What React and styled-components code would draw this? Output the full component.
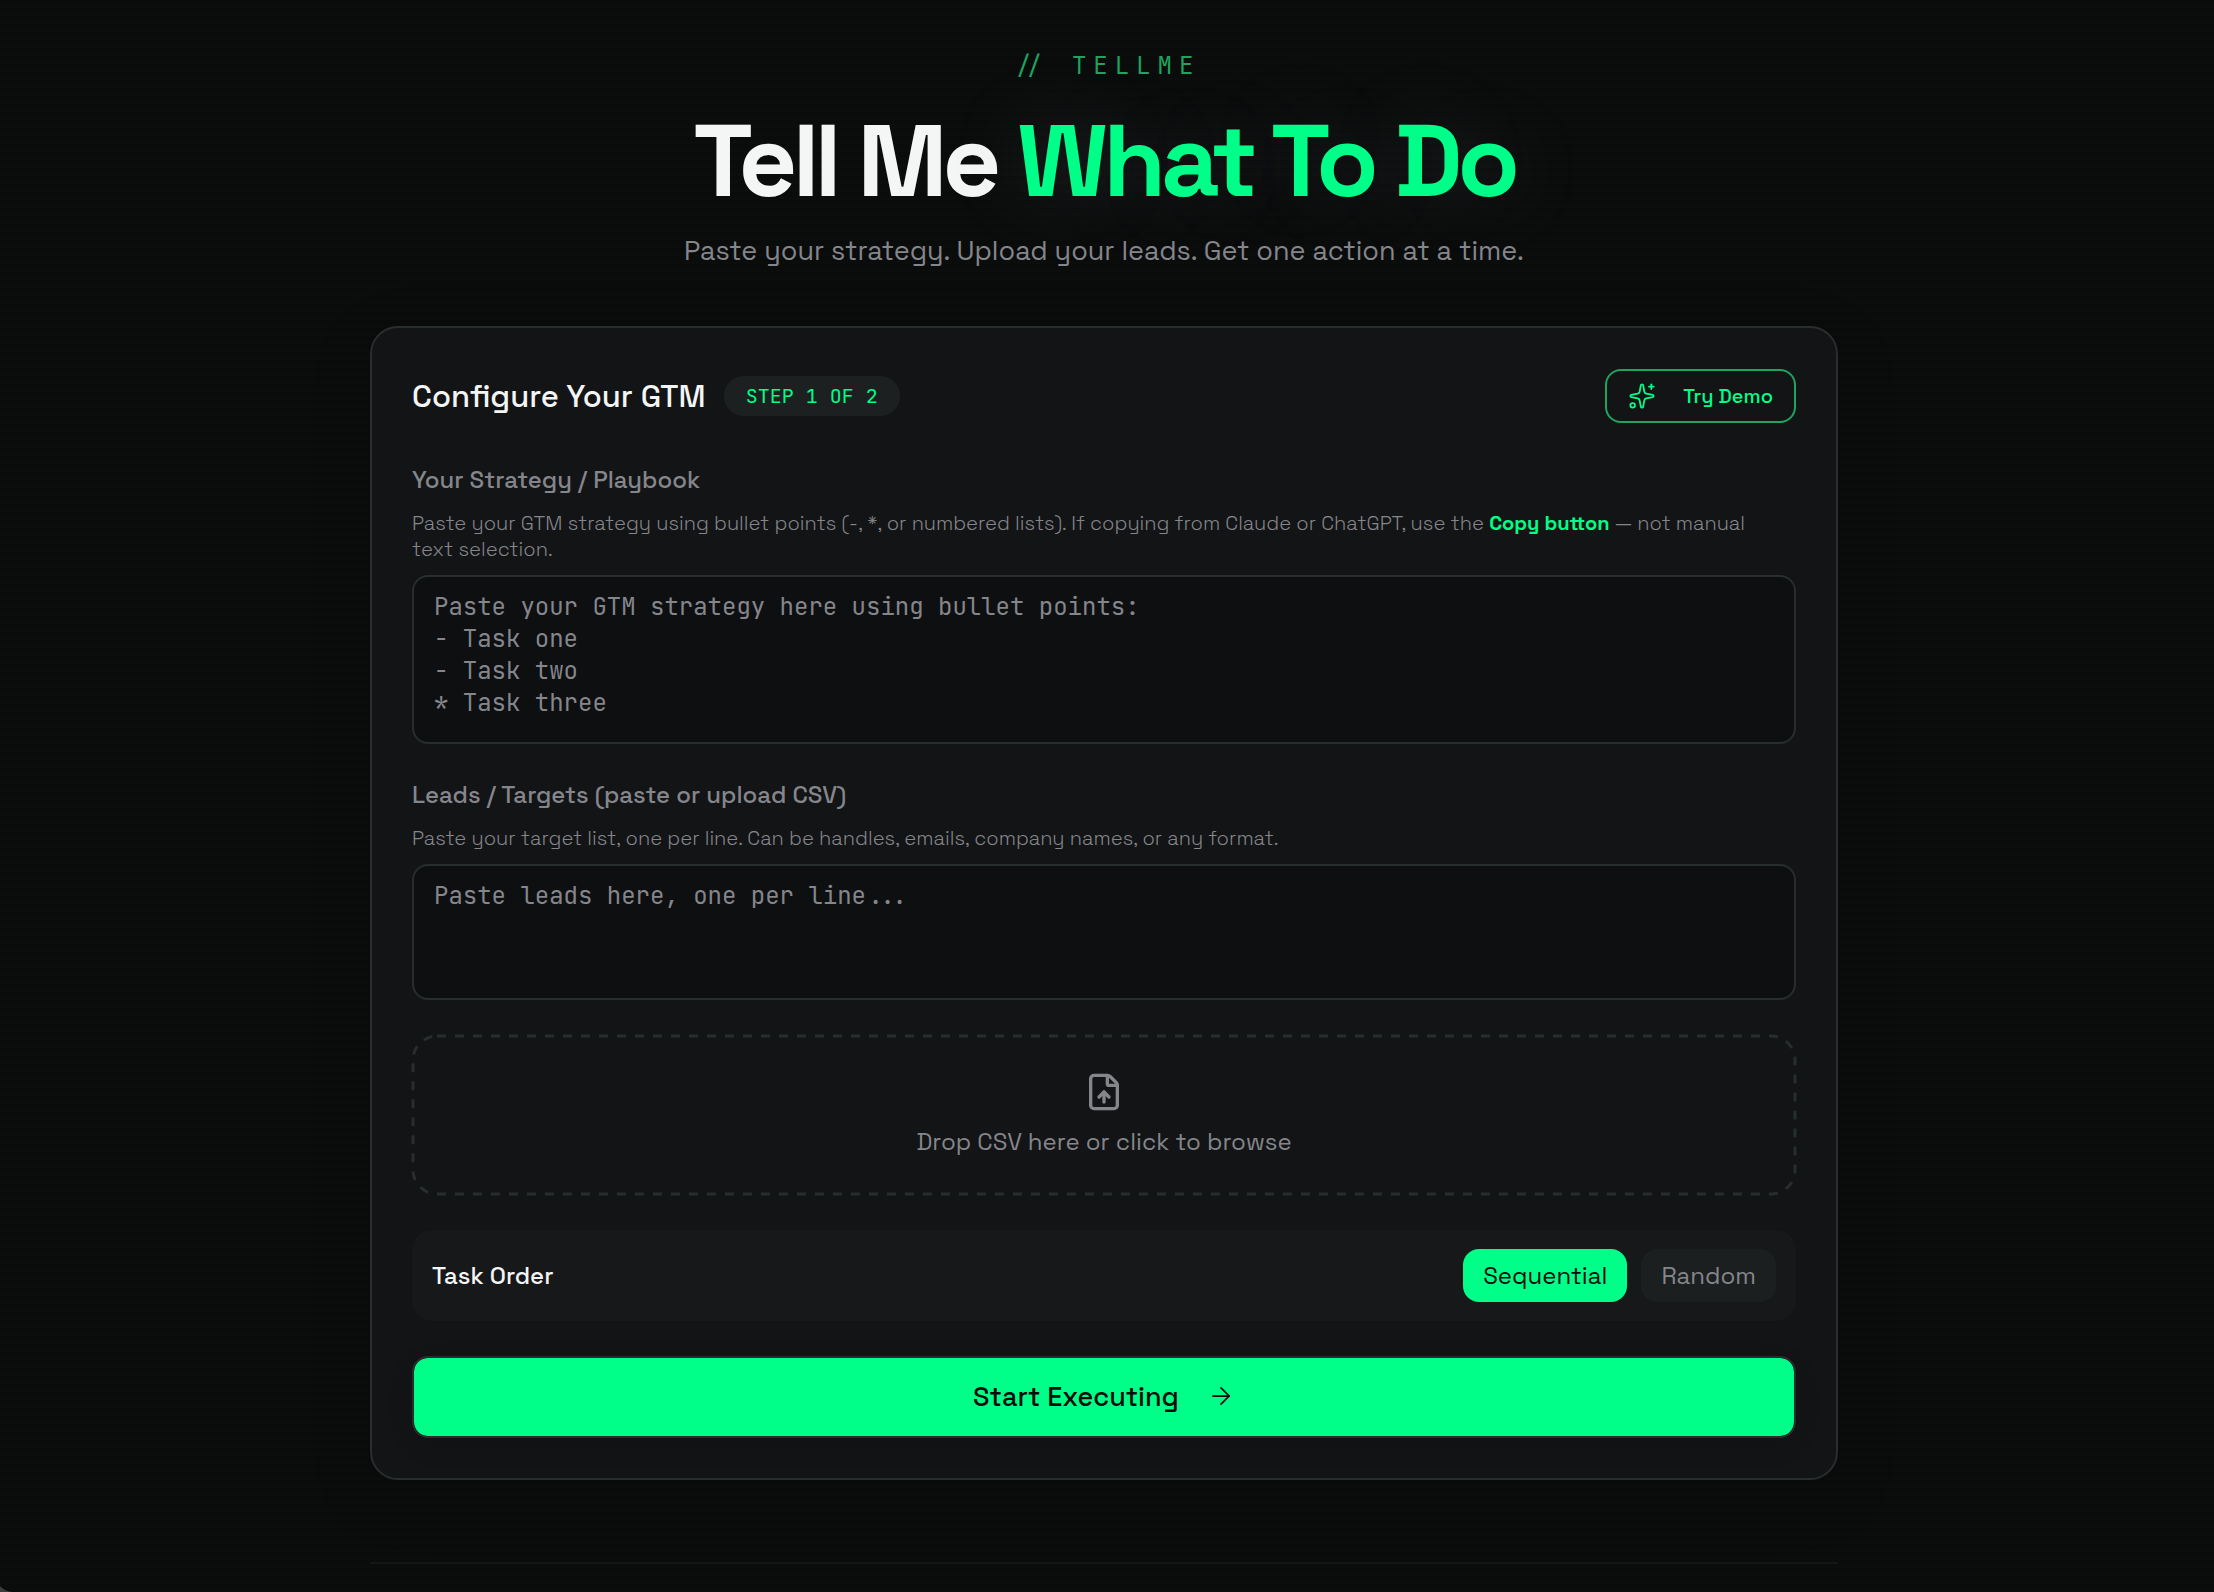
import React, { useState } from "react";
import styled, { createGlobalStyle } from "styled-components";
import { Sparkles, FileUp, ArrowRight } from "lucide-react";

const sans = `"Space Grotesk", Inter, "Liberation Sans", sans-serif`;
const mono = `"JetBrains Mono", "DejaVu Sans Mono", "Liberation Mono", monospace`;

const c = {
  bg: "#0a0c0b",
  card: "#131416",
  field: "#0e0f11",
  line: "#282d2e",
  accent: "#00ff88",
  accentDim: "#1fa35f",
  text: "#f4f5f5",
  muted: "#85868b",
};

const GlobalStyle = createGlobalStyle`
  * { box-sizing: border-box; }
  html { background: ${c.bg}; overflow: hidden; }
  body { margin: 0; font-family: ${sans}; color: ${c.text}; }
  button, textarea { font: inherit; }
`;

const Page = styled.div`
  position: relative;
  min-height: 100vh;
  display: flex;
  flex-direction: column;
  align-items: center;
  padding: 48px 46px 0 40px;
  background: repeating-linear-gradient(${c.bg} 0 5px, #0b0d0c 5px 8px);
`;

const WindowCorner = styled.svg`
  position: absolute;
  left: 0;
  bottom: 0;
  width: 12px;
  height: 7px;
`;

const Column = styled.div`
  width: 100%;
  max-width: 1468px;
  display: flex;
  flex-direction: column;
`;

const Hero = styled.header`
  display: flex;
  flex-direction: column;
  align-items: center;
  text-align: center;
  padding-bottom: 57px;
`;

const Eyebrow = styled.p`
  margin: 0;
  font: 400 24px/36px ${mono};
  font-feature-settings: "calt" 1;
  letter-spacing: 7px;
  white-space: pre;
  color: ${c.accentDim};
`;

const Title = styled.h1`
  margin: 23px 0 18px;
  font-size: 102px;
  line-height: 108px;
  font-weight: 700;
  letter-spacing: -5px;
`;

const Accent = styled.span`
  color: ${c.accent};
  text-shadow: 0 0 80px rgba(160, 155, 190, 0.2);
`;

const Subtitle = styled.p`
  margin: 0;
  font-size: 27px;
  line-height: 36px;
  font-weight: 400;
  color: ${c.muted};
`;

const Card = styled.main`
  display: flex;
  flex-direction: column;
  padding: 41px 40px 40px;
  border: 2px solid ${c.line};
  border-radius: 28px;
  background: ${c.card};
  box-shadow: 0 16px 64px rgba(0, 0, 0, 0.14);
`;

const CardHeader = styled.div`
  display: flex;
  align-items: center;
  gap: 18px;
  margin-bottom: 41px;
`;

const CardTitle = styled.h2`
  margin: 0;
  font-size: 31px;
  line-height: 40px;
  font-weight: 500;
`;

const Badge = styled.span`
  padding: 0 22px;
  border-radius: 20px;
  background: #1d2021;
  font: 400 20px/40px ${mono};
  color: ${c.accent};
`;

const DemoButton = styled.button`
  display: flex;
  align-items: center;
  gap: 27px;
  height: 54px;
  margin-left: auto;
  padding: 0 21px;
  border: 2px solid ${c.accentDim};
  border-radius: 16px;
  background: transparent;
  color: ${c.accent};
  font-size: 20px;
  font-weight: 500;
`;

const Field = styled.div`
  display: flex;
  flex-direction: column;
  margin-bottom: 35px;
`;

const Label = styled.label`
  font-size: 24px;
  line-height: 32px;
  font-weight: 500;
  color: ${c.muted};
`;

const Help = styled.p`
  margin: 14px 0 13px;
  padding-right: 20px;
  font-size: 20px;
  line-height: 26px;
  font-weight: 300;
  color: ${c.muted};

  strong {
    font-weight: 700;
    color: ${c.accent};
  }
`;

const Area = styled.textarea`
  display: block;
  width: 100%;
  height: ${(p) => p.$height}px;
  padding: 14px 20px;
  border: 2px solid ${c.line};
  border-radius: 16px;
  background: ${c.field};
  color: ${c.text};
  font: 400 24px/32px ${mono};
  resize: none;

  &::placeholder {
    color: ${c.muted};
    opacity: 1;
  }
`;

const DropZone = styled.button`
  position: relative;
  display: flex;
  flex-direction: column;
  align-items: center;
  gap: 14px;
  height: 160px;
  margin-bottom: 35px;
  padding: 37px 0 0;
  border: 0;
  border-radius: 24px;
  background: transparent;
  color: ${c.muted};
  font-size: 24px;
  line-height: 32px;
`;

const Dashes = styled.svg`
  position: absolute;
  inset: 0;
  width: 100%;
  height: 100%;
  padding: 1px;
  overflow: visible;
`;

const OrderRow = styled.div`
  display: flex;
  align-items: center;
  gap: 14px;
  margin-bottom: 35px;
  padding: 19px 20px;
  border-radius: 20px;
  background: #16181a;
`;

const OrderLabel = styled.span`
  margin-right: auto;
  font-size: 24px;
  font-weight: 500;
`;

const Choice = styled.button`
  height: 53px;
  padding: 0 20px;
  border: 0;
  border-radius: 16px;
  background: ${(p) => (p.$active ? c.accent : "#1c1f20")};
  color: ${(p) => (p.$active ? "#0a0c0b" : c.muted)};
  font-size: 24px;
`;

const StartButton = styled.button`
  display: flex;
  align-items: center;
  justify-content: center;
  gap: 28px;
  height: 82px;
  padding: 0 0 2px;
  border: 2px solid ${c.line};
  border-radius: 16px;
  background: ${c.accent};
  background-clip: padding-box;
  color: #0a0c0b;
  font-size: 27px;
  font-weight: 500;
  box-shadow: 0 8px 24px rgba(0, 0, 0, 0.12);
`;

const Footer = styled.footer`
  height: 28px;
  margin-top: 82px;
  border-top: 2px solid #141616;
`;

export default function App() {
  const [order, setOrder] = useState("Sequential");
  return (
    <Page>
      <GlobalStyle />
      <Column>
        <Hero>
          <Eyebrow>{"// TELLME"}</Eyebrow>
          <Title>
            Tell Me <Accent>What To Do</Accent>
          </Title>
          <Subtitle>Paste your strategy. Upload your leads. Get one action at a time.</Subtitle>
        </Hero>
        <Card>
          <CardHeader>
            <CardTitle>Configure Your GTM</CardTitle>
            <Badge>STEP 1 OF 2</Badge>
            <DemoButton type="button">
              <Sparkles size={28} strokeWidth={1.5} />
              Try Demo
            </DemoButton>
          </CardHeader>
          <Field>
            <Label htmlFor="strategy">Your Strategy / Playbook</Label>
            <Help>
              Paste your GTM strategy using bullet points (-, *, or numbered lists). If copying from
              Claude or ChatGPT, use the <strong>Copy button</strong> — not manual text selection.
            </Help>
            <Area
              id="strategy"
              $height={169}
              placeholder={
                "Paste your GTM strategy here using bullet points:\n- Task one\n- Task two\n* Task three"
              }
            />
          </Field>
          <Field>
            <Label htmlFor="leads">Leads / Targets (paste or upload CSV)</Label>
            <Help>
              Paste your target list, one per line. Can be handles, emails, company names, or any
              format.
            </Help>
            <Area id="leads" $height={136} placeholder="Paste leads here, one per line..." />
          </Field>
          <DropZone type="button">
            <Dashes aria-hidden="true">
              <rect
                width="100%"
                height="100%"
                rx="24"
                fill="none"
                stroke={c.line}
                strokeWidth="3"
                strokeDasharray="9 9"
              />
            </Dashes>
            <FileUp size={40} />
            Drop CSV here or click to browse
          </DropZone>
          <OrderRow role="group" aria-labelledby="order">
            <OrderLabel id="order">Task Order</OrderLabel>
            {["Sequential", "Random"].map((name) => (
              <Choice
                key={name}
                type="button"
                $active={order === name}
                aria-pressed={order === name}
                onClick={() => setOrder(name)}
              >
                {name}
              </Choice>
            ))}
          </OrderRow>
          <StartButton type="button">
            Start Executing
            <ArrowRight size={28} strokeWidth={1.5} />
          </StartButton>
        </Card>
        <Footer />
      </Column>
      <WindowCorner viewBox="0 0 12 7" aria-hidden="true">
        <path d="M0 1Q4 6 12 7H0Z" fill="#3a3d3f" />
      </WindowCorner>
    </Page>
  );
}
